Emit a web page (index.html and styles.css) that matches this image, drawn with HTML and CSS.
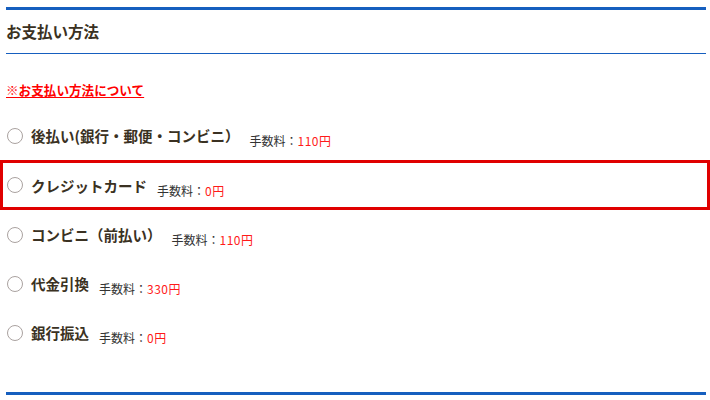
FILE: index.html
```html
<!DOCTYPE html>
<html lang="ja">
<head>
    <meta charset="UTF-8">
    <title>お支払い方法</title>
    <link rel="stylesheet" href="styles.css">
</head>
<body>
    <div class="payment">
        <h2 class="payment-title">お支払い方法</h2>

        <p class="payment-note"><a href="#">※お支払い方法について</a></p>

        <div class="method-list">
            <label class="method">
                <span class="radio"></span>
                <span class="method-name">後払い(銀行・郵便・コンビニ）</span>
                <span class="fee">手数料：<span class="fee-price">110円</span></span>
            </label>
            <label class="method selected">
                <span class="radio"></span>
                <span class="method-name">クレジットカード</span>
                <span class="fee">手数料：<span class="fee-price">0円</span></span>
            </label>
            <label class="method">
                <span class="radio"></span>
                <span class="method-name">コンビニ（前払い）</span>
                <span class="fee">手数料：<span class="fee-price">110円</span></span>
            </label>
            <label class="method">
                <span class="radio"></span>
                <span class="method-name">代金引換</span>
                <span class="fee">手数料：<span class="fee-price">330円</span></span>
            </label>
            <label class="method">
                <span class="radio"></span>
                <span class="method-name">銀行振込</span>
                <span class="fee">手数料：<span class="fee-price">0円</span></span>
            </label>
        </div>
    </div>
</body>
</html>
```

FILE: styles.css
```css
body {
    margin: 0;
    background: #fff;
    font-family: "Noto Sans CJK JP", "Noto Sans", sans-serif;
    color: #3a3122;
}
.payment {
    width: 700px;
    margin: 7px 0 0 6px;
    border-top: 3px solid #165fbf;
    border-bottom: 3px solid #165fbf;
    padding-bottom: 35px;
}
.payment-title {
    margin: 0;
    height: 43px;
    line-height: 43px;
    font-size: 15.5px;
    font-weight: bold;
    color: #3a3122;
    border-bottom: 1px solid #165fbf;
}
.payment-note {
    margin: 0;
    padding-top: 25px;
    height: 32px;
    line-height: 22px;
    font-size: 12.6px;
    font-weight: bold;
}
.payment-note a {
    color: #ff0000;
    text-decoration: underline;
    text-underline-offset: 2px;
}
.method {
    display: flex;
    align-items: center;
    height: 49px;
    box-sizing: border-box;
    cursor: pointer;
}
.method.selected {
    height: 50px;
    margin: 0 -4px 0 -6px;
    padding-left: 6px;
    border: 3px solid #e00000;
}
.method.selected .radio {
    margin-left: -2px;
}
.radio {
    width: 14px;
    height: 14px;
    border: 1px solid #aaa2a0;
    border-radius: 50%;
    margin-left: 1px;
    flex-shrink: 0;
}
.method-name {
    margin-left: 8px;
    font-size: 14.5px;
    font-weight: bold;
    color: #3a3122;
}
.fee {
    margin-left: 10px;
    margin-top: 10px;
    font-size: 12px;
    color: #333;
}
.fee-price {
    color: #ff1a1a;
    letter-spacing: 0.5px;
}
```
